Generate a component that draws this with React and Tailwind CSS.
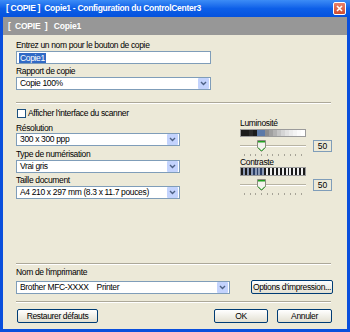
import React from "react"

const font = { fontFamily: "'Liberation Sans', Arial, sans-serif" }

function Select({ value, className = "" }) {
  return (
    <div className={`flex h-[13px] items-center border border-[#7f9db9] bg-white ${className}`}>
      <span className="flex-1 overflow-hidden whitespace-pre pl-[3px] text-[8.5px] leading-none tracking-[-0.35px] text-black">{value}</span>
      <span className="mr-px flex h-[11px] w-[11px] shrink-0 items-center justify-center rounded-[1px] bg-[#c3d3fd]">
        <svg width="7" height="5" viewBox="0 0 7 5">
          <path d="M1 1l2.5 2.5L6 1" stroke="#4d6185" strokeWidth="1.4" fill="none" />
        </svg>
      </span>
    </div>
  )
}

function Btn({ children, className = "" }) {
  return (
    <div
      className={`flex h-[14px] items-center justify-center whitespace-nowrap rounded-[2px] border border-[#003c74] bg-gradient-to-b from-white to-[#e3e0d2] text-[8.5px] leading-none tracking-[-0.35px] text-black ${className}`}
    >
      {children}
    </div>
  )
}

function Slider() {
  return (
    <div className="flex w-[92px] flex-col">
      <div className="flex h-[14px] items-center">
        <div className="relative h-[14px] w-[66px]">
          <div className="absolute left-0 right-0 top-[6px] h-[2px] border-t border-[#b8b4a4] bg-white" />
          <div className="absolute left-[17px] top-[1px]">
            <svg width="9" height="12" viewBox="0 0 9 12">
              <path d="M0.5 0.5h8v7l-4 4l-4-4z" fill="#f4f3ee" stroke="#8c8a80" />
              <path d="M1 1h7v1.5H1z" fill="#21a121" />
              <path d="M1 7.5l3.5 3.5l3.5-3.5" fill="none" stroke="#21a121" />
            </svg>
          </div>
        </div>
        <div className="ml-[7px] flex h-[12px] w-[19px] items-center justify-center border border-[#7f9db9] text-[8.5px] leading-none text-black">
          50
        </div>
      </div>
      <div className="flex w-[66px] justify-between px-[4px] pt-px">
        {Array.from({ length: 11 }).map((_, i) => (
          <span key={i} className="h-[2px] w-px bg-[#a6a397]" />
        ))}
      </div>
    </div>
  )
}

const label = "text-[8.5px] tracking-[-0.35px]"

export default function App() {
  const lumSteps = ["#1b1b1b", "#1b1b1b", "#2a2a2a", "#1b1b1b", "#5c7aa8", "#5c7aa8", "#8d8d8d", "#a0a0a0", "#b2b2b2", "#c5c5c5", "#d5d5d5", "#e2e2e2", "#ececec", "#f4f4f4", "#fbfbfb", "#ffffff"]
  const stripes = Array.from({ length: 33 })

  return (
    <div style={font} className="flex h-[332px] w-[350px] flex-col bg-[#0a4fdc] px-[3px] pb-[3px]">
      {/* title bar */}
      <div className="-mx-[3px] flex h-[17px] items-center justify-between bg-gradient-to-b from-[#3c8cf6] via-[#0d5fe8] to-[#0552dd] pl-[6px] pr-[4px]">
        <span className="whitespace-pre text-[8.5px] font-bold tracking-[-0.3px] text-white">
          {"[ COPIE ]  Copie1 - Configuration du ControlCenter3"}
        </span>
        <span className="flex h-[13px] w-[13px] items-center justify-center rounded-[2px] border border-white bg-gradient-to-b from-[#e9806a] to-[#cf4b2e]">
          <svg width="7" height="7" viewBox="0 0 7 7">
            <path d="M1 1l5 5M6 1l-5 5" stroke="white" strokeWidth="1.6" />
          </svg>
        </span>
      </div>

      {/* gray header band */}
      <div className="flex h-[18px] items-center bg-[#979797] pl-[5px]">
        <span className="whitespace-pre text-[8.5px] font-bold tracking-[-0.2px] text-white">{"[  COPIE  ]   Copie1"}</span>
      </div>

      {/* content */}
      <div className="flex flex-1 flex-col bg-[#ece9d8] px-[13px] text-black">
        <div className={`mt-[5px] h-[11px] leading-[11px] ${label}`}>Entrez un nom pour le bouton de copie</div>
        <div className="flex h-[13px] w-[195px] items-center border border-[#7f9db9] bg-white pl-[2px]">
          <span className={`bg-[#316ac5] px-px leading-[10px] text-white ${label}`}>Copie1</span>
        </div>
        <div className={`mt-[2px] h-[11px] leading-[11px] ${label}`}>Rapport de copie</div>
        <Select value="Copie 100%" className="w-[195px]" />

        <div className="mt-[12px] h-[2px] w-[315px] border-b border-t border-[#aca899] border-b-white" />

        <div className="flex">
          {/* left column */}
          <div className="flex w-[164px] flex-col">
            <div className="mt-[4px] flex h-[11px] items-center">
              <span className="ml-px mr-[2px] h-[9px] w-[9px] border border-[#1c5180] bg-white" />
              <span className={`leading-none ${label}`}>Afficher l'interface du scanner</span>
            </div>
            <div className={`mt-[4px] h-[10px] leading-[10px] ${label}`}>Résolution</div>
            <Select value="300 x 300 ppp" className="h-[12px]" />
            <div className={`mt-[3px] h-[11px] leading-[11px] ${label}`}>Type de numérisation</div>
            <Select value="Vrai gris" className="h-[12px]" />
            <div className={`mt-[2px] h-[11px] leading-[11px] ${label}`}>Taille document</div>
            <Select value="A4 210 x 297 mm (8.3 x 11.7 pouces)" className="h-[12px]" />
          </div>

          {/* right column */}
          <div className="ml-[60px] flex flex-col pt-[14px]">
            <div className={`h-[11px] leading-[11px] ${label}`}>Luminosité</div>
            <div className="flex h-[8px] w-[66px] border border-[#9b9b9b]">
              {lumSteps.map((c, i) => (
                <span key={i} className="h-full flex-1" style={{ backgroundColor: c }} />
              ))}
            </div>
            <div className="mt-[2px]">
              <Slider />
            </div>
            <div className={`mt-[1px] h-[10px] leading-[10px] ${label}`}>Contraste</div>
            <div className="flex h-[9px] w-[66px] border border-[#9b9b9b] bg-white">
              {stripes.map((_, i) => (
                <span
                  key={i}
                  className="h-full flex-1"
                  style={{ backgroundColor: i % 2 === 0 ? (i > 4 && i < 12 ? "#2c3f66" : "#1b1b1b") : i < 12 ? "#8c9ab5" : "#f0f0f0" }}
                />
              ))}
            </div>
            <div className="mt-[2px]">
              <Slider />
            </div>
          </div>
        </div>

        {/* bottom */}
        <div className="mt-auto h-[2px] w-[315px] border-b border-t border-[#aca899] border-b-white" />
        <div className={`mt-[1px] h-[12px] leading-[12px] ${label}`}>Nom de l'imprimante</div>
        <div className="mt-[2px] flex items-center">
          <Select value="Brother MFC-XXXX    Printer" className="w-[214px]" />
          <Btn className="ml-[21px] h-[13px] w-[82px]">Options d'impression...</Btn>
        </div>
        <div className="mt-[7px] h-[2px] w-[315px] border-b border-t border-[#aca899] border-b-white" />
        <div className="mb-[6px] mt-[6px] flex items-center">
          <Btn className="ml-px w-[81px]">Restaurer défauts</Btn>
          <Btn className="ml-auto w-[54px]">OK</Btn>
          <Btn className="ml-[9px] mr-[2px] w-[55px]">Annuler</Btn>
        </div>
      </div>
    </div>
  )
}
